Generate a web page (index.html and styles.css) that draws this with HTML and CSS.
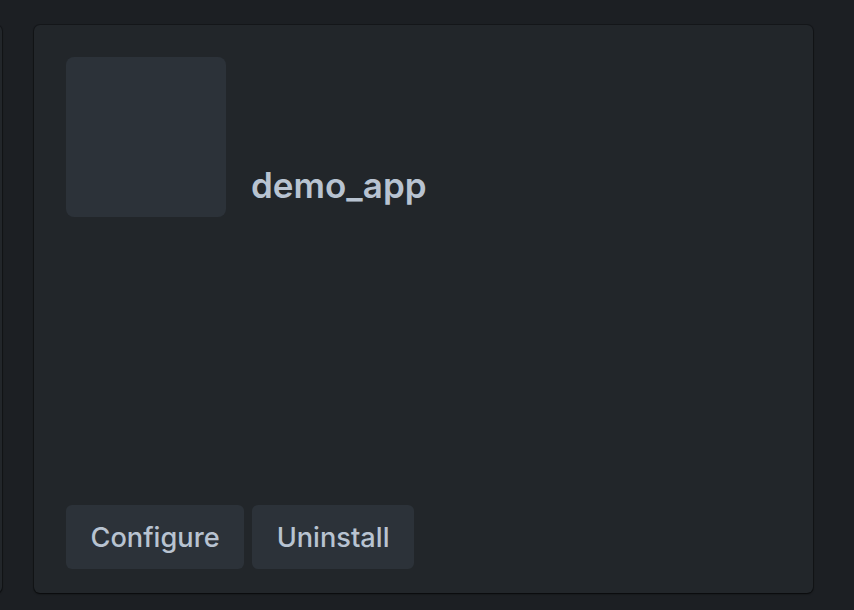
FILE: index.html
```html
<!DOCTYPE html>
<html>
<head>
<meta charset="utf-8">
<link rel="stylesheet" href="styles.css">
</head>
<body>
<div class="row">
  <div class="card ghost"></div>
  <div class="card">
    <div class="head">
      <div class="logo"></div>
      <div class="name">demo_app</div>
    </div>
    <div class="actions">
      <button class="btn">Configure</button>
      <button class="btn">Uninstall</button>
    </div>
  </div>
</div>
</body>
</html>
```
FILE: styles.css
```css
html, body {
  margin: 0;
  padding: 0;
  background: #1c1f23;
  height: 100%;
  overflow: hidden;
  font-family: Inter, "Noto Sans", sans-serif;
}
.row {
  display: flex;
  gap: 32px;
  padding-top: 25px;
  margin-left: -777px;
}
.card {
  flex: 0 0 779px;
  height: 568px;
  box-sizing: border-box;
  background: #22262a;
  border-radius: 6px;
  box-shadow: 0 1px 2px rgba(0,0,0,0.6), 0 0 0 1px rgba(0,0,0,0.25);
  padding: 32px 32px 24px;
  display: flex;
  flex-direction: column;
  justify-content: space-between;
}
.head {
  display: flex;
  align-items: flex-end;
  gap: 25px;
}
.logo {
  width: 160px;
  height: 160px;
  border-radius: 8px;
  background: #2c3239;
}
.name {
  color: #b8c3d1;
  font-size: 35px;
  font-weight: 600;
  line-height: 1;
  padding-bottom: 14px;
}
.actions {
  display: flex;
  gap: 8px;
}
.btn {
  font-family: inherit;
  background: #2c3239;
  border: none;
  border-radius: 6px;
  color: #b8c3d1;
  font-size: 27.2px;
  font-weight: 500;
  height: 64px;
  padding: 0 24.5px;
}
```
